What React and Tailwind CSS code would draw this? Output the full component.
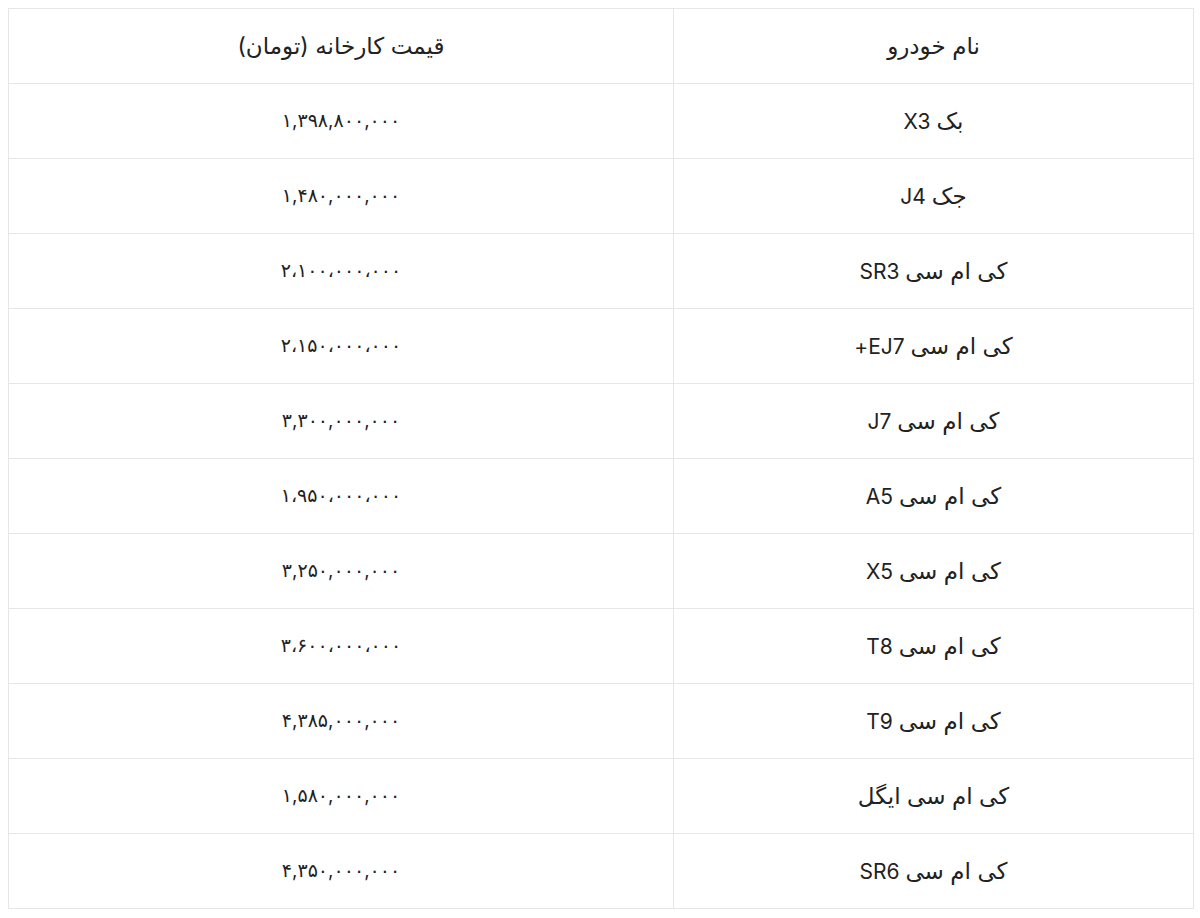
const rows = [
  ["بک", "X3", "۱,۳۹۸,۸۰۰,۰۰۰"],
  ["جک", "J4", "۱,۴۸۰,۰۰۰,۰۰۰"],
  ["کی ام سی", "SR3", "۲،۱۰۰،۰۰۰،۰۰۰"],
  ["کی ام سی", "EJ7+", "۲،۱۵۰،۰۰۰،۰۰۰"],
  ["کی ام سی", "J7", "۳,۳۰۰,۰۰۰,۰۰۰"],
  ["کی ام سی", "A5", "۱،۹۵۰،۰۰۰،۰۰۰"],
  ["کی ام سی", "X5", "۳,۲۵۰,۰۰۰,۰۰۰"],
  ["کی ام سی", "T8", "۳،۶۰۰،۰۰۰،۰۰۰"],
  ["کی ام سی", "T9", "۴,۳۸۵,۰۰۰,۰۰۰"],
  ["کی ام سی ایگل", "", "۱,۵۸۰,۰۰۰,۰۰۰"],
  ["کی ام سی", "SR6", "۴,۳۵۰,۰۰۰,۰۰۰"],
];

const cell = "border border-[#e6e6e6] text-center align-middle";

export default function App() {
  return (
    <div className="min-h-screen bg-white p-2 font-['Inter','DejaVu_Sans',sans-serif] text-[#222]">
      <table dir="rtl" className="w-[1185px] border-collapse table-fixed">
        <colgroup>
          <col className="w-[520px]" />
          <col className="w-[665px]" />
        </colgroup>
        <thead>
          <tr className="h-[75px]">
            <th className={`${cell} font-normal text-[23px]`}>نام خودرو</th>
            <th className={`${cell} font-normal text-[23px]`}>قیمت کارخانه (تومان)</th>
          </tr>
        </thead>
        <tbody>
          {rows.map(([fa, latin, price]) => (
            <tr key={fa + latin} className="h-[75px]">
              <td className={cell}>
                <span className="text-[23px]">{fa}</span>
                {latin && <span className="text-[21px]"> {latin}</span>}
              </td>
              <td className={`${cell} text-[19px]`}>{price}</td>
            </tr>
          ))}
        </tbody>
      </table>
    </div>
  );
}
